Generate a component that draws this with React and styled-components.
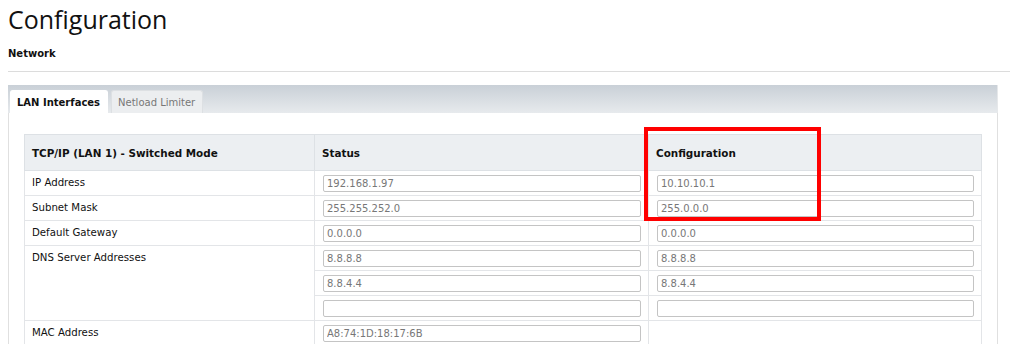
import React from "react";
import styled, { createGlobalStyle } from "styled-components";

const Global = createGlobalStyle`
  html, body { margin: 0; padding: 0; background: #fff; }
  body { font-family: "DejaVu Sans", Verdana, sans-serif; color: #111; }
`;

const Page = styled.div`
  padding: 0 0 0 8px;
  width: 1002px;
  overflow: hidden;
`;

const Title = styled.h1`
  margin: 0;
  padding-top: 1px;
  font-family: "Open Sans", "Noto Sans", sans-serif;
  font-weight: 400;
  font-size: 25px;
  line-height: 36px;
  color: #111;
`;

const Section = styled.h2`
  margin: 10px 0 0;
  font-size: 10px;
  font-weight: bold;
  line-height: 14px;
  color: #111;
`;

const Divider = styled.hr`
  margin: 10px 0 0;
  border: 0;
  border-top: 1px solid #dcdcdc;
  height: 0;
`;

const TabArea = styled.div`
  margin: 13px 12px 0 0;
`;

const TabBar = styled.div`
  display: flex;
  align-items: flex-end;
  gap: 3px;
  height: 28px;
  padding-left: 2px;
  background: linear-gradient(to bottom, #c9d0d7, #e7eaed);
  border-right: 1px solid #e6e8ea;
`;

const Tab = styled.div`
  height: 23px;
  box-sizing: border-box;
  display: flex;
  align-items: center;
  padding: 0 7px 0 6px;
  border-radius: 3px 3px 0 0;
  font-size: 10px;
  font-weight: ${(p) => (p.$active ? "bold" : "normal")};
  color: ${(p) => (p.$active ? "#111" : "#777")};
  background: ${(p) => (p.$active ? "#fff" : "#eceef0")};
  border: 1px solid ${(p) => (p.$active ? "#fff" : "#dde0e3")};
  border-bottom: 0;
`;

const Panel = styled.div`
  border-left: 1px solid #e0e0e0;
  border-right: 1px solid #e0e0e0;
  padding: 21px 15px 0;
  height: 240px;
`;

const TableWrap = styled.div`
  position: relative;
`;

const Table = styled.table`
  width: 100%;
  border-collapse: collapse;
  table-layout: fixed;
  font-size: 10px;
`;

const Row = styled.tr`
  height: 25px;
`;

const HeadRow = styled.tr`
  height: 36px;
`;

const HeadCell = styled.th`
  padding: 0 7px;
  text-align: left;
  font-size: 10.4px;
  font-weight: bold;
  background: #eceff2;
  border: 1px solid #dde1e5;
  color: #111;
`;

const LabelCell = styled.td`
  padding: 0 7px;
  vertical-align: ${(p) => (p.$top ? "top" : "middle")};
  line-height: 24px;
  font-size: 10.2px;
  border: 1px solid #e3e5e8;
  color: #111;
`;

const InputCell = styled.td`
  padding: 0 7px 0 8px;
  vertical-align: middle;
  border: 1px solid #e3e5e8;
`;

const Field = styled.input`
  display: block;
  width: 100%;
  box-sizing: border-box;
  height: 17px;
  padding: 0 3px;
  border: 1px solid #c4c4c4;
  border-radius: 2px;
  font-family: "DejaVu Sans", Verdana, sans-serif;
  font-size: 10px;
  color: #777;
  background: #fff;
  outline: none;
`;

const Highlight = styled.div`
  position: absolute;
  left: 620px;
  top: -7px;
  width: 177px;
  height: 94px;
  box-sizing: border-box;
  border: 4px solid #ff0000;
  pointer-events: none;
`;

const rows = [
  { label: "IP Address", status: "192.168.1.97", config: "10.10.10.1" },
  { label: "Subnet Mask", status: "255.255.252.0", config: "255.0.0.0" },
  { label: "Default Gateway", status: "0.0.0.0", config: "0.0.0.0" },
];

export default function App() {
  return (
    <>
      <Global />
      <Page>
        <Title>Configuration</Title>
        <Section>Network</Section>
        <Divider />
        <TabArea>
          <TabBar>
            <Tab $active>LAN Interfaces</Tab>
            <Tab>Netload Limiter</Tab>
          </TabBar>
          <Panel>
            <TableWrap>
              <Table>
                <colgroup>
                  <col style={{ width: 290 }} />
                  <col style={{ width: 334 }} />
                  <col />
                </colgroup>
                <thead>
                  <HeadRow>
                    <HeadCell>TCP/IP (LAN 1) - Switched Mode</HeadCell>
                    <HeadCell>Status</HeadCell>
                    <HeadCell>Configuration</HeadCell>
                  </HeadRow>
                </thead>
                <tbody>
                  {rows.map((r) => (
                    <Row key={r.label}>
                      <LabelCell>{r.label}</LabelCell>
                      <InputCell>
                        <Field readOnly value={r.status} />
                      </InputCell>
                      <InputCell>
                        <Field readOnly value={r.config} />
                      </InputCell>
                    </Row>
                  ))}
                  <Row>
                    <LabelCell rowSpan={3} $top>
                      DNS Server Addresses
                    </LabelCell>
                    <InputCell>
                      <Field readOnly value="8.8.8.8" />
                    </InputCell>
                    <InputCell>
                      <Field readOnly value="8.8.8.8" />
                    </InputCell>
                  </Row>
                  <Row>
                    <InputCell>
                      <Field readOnly value="8.8.4.4" />
                    </InputCell>
                    <InputCell>
                      <Field readOnly value="8.8.4.4" />
                    </InputCell>
                  </Row>
                  <Row>
                    <InputCell>
                      <Field readOnly value="" />
                    </InputCell>
                    <InputCell>
                      <Field readOnly value="" />
                    </InputCell>
                  </Row>
                  <Row>
                    <LabelCell>MAC Address</LabelCell>
                    <InputCell>
                      <Field readOnly value="A8:74:1D:18:17:6B" />
                    </InputCell>
                    <InputCell />
                  </Row>
                </tbody>
              </Table>
              <Highlight />
            </TableWrap>
          </Panel>
        </TabArea>
      </Page>
    </>
  );
}
